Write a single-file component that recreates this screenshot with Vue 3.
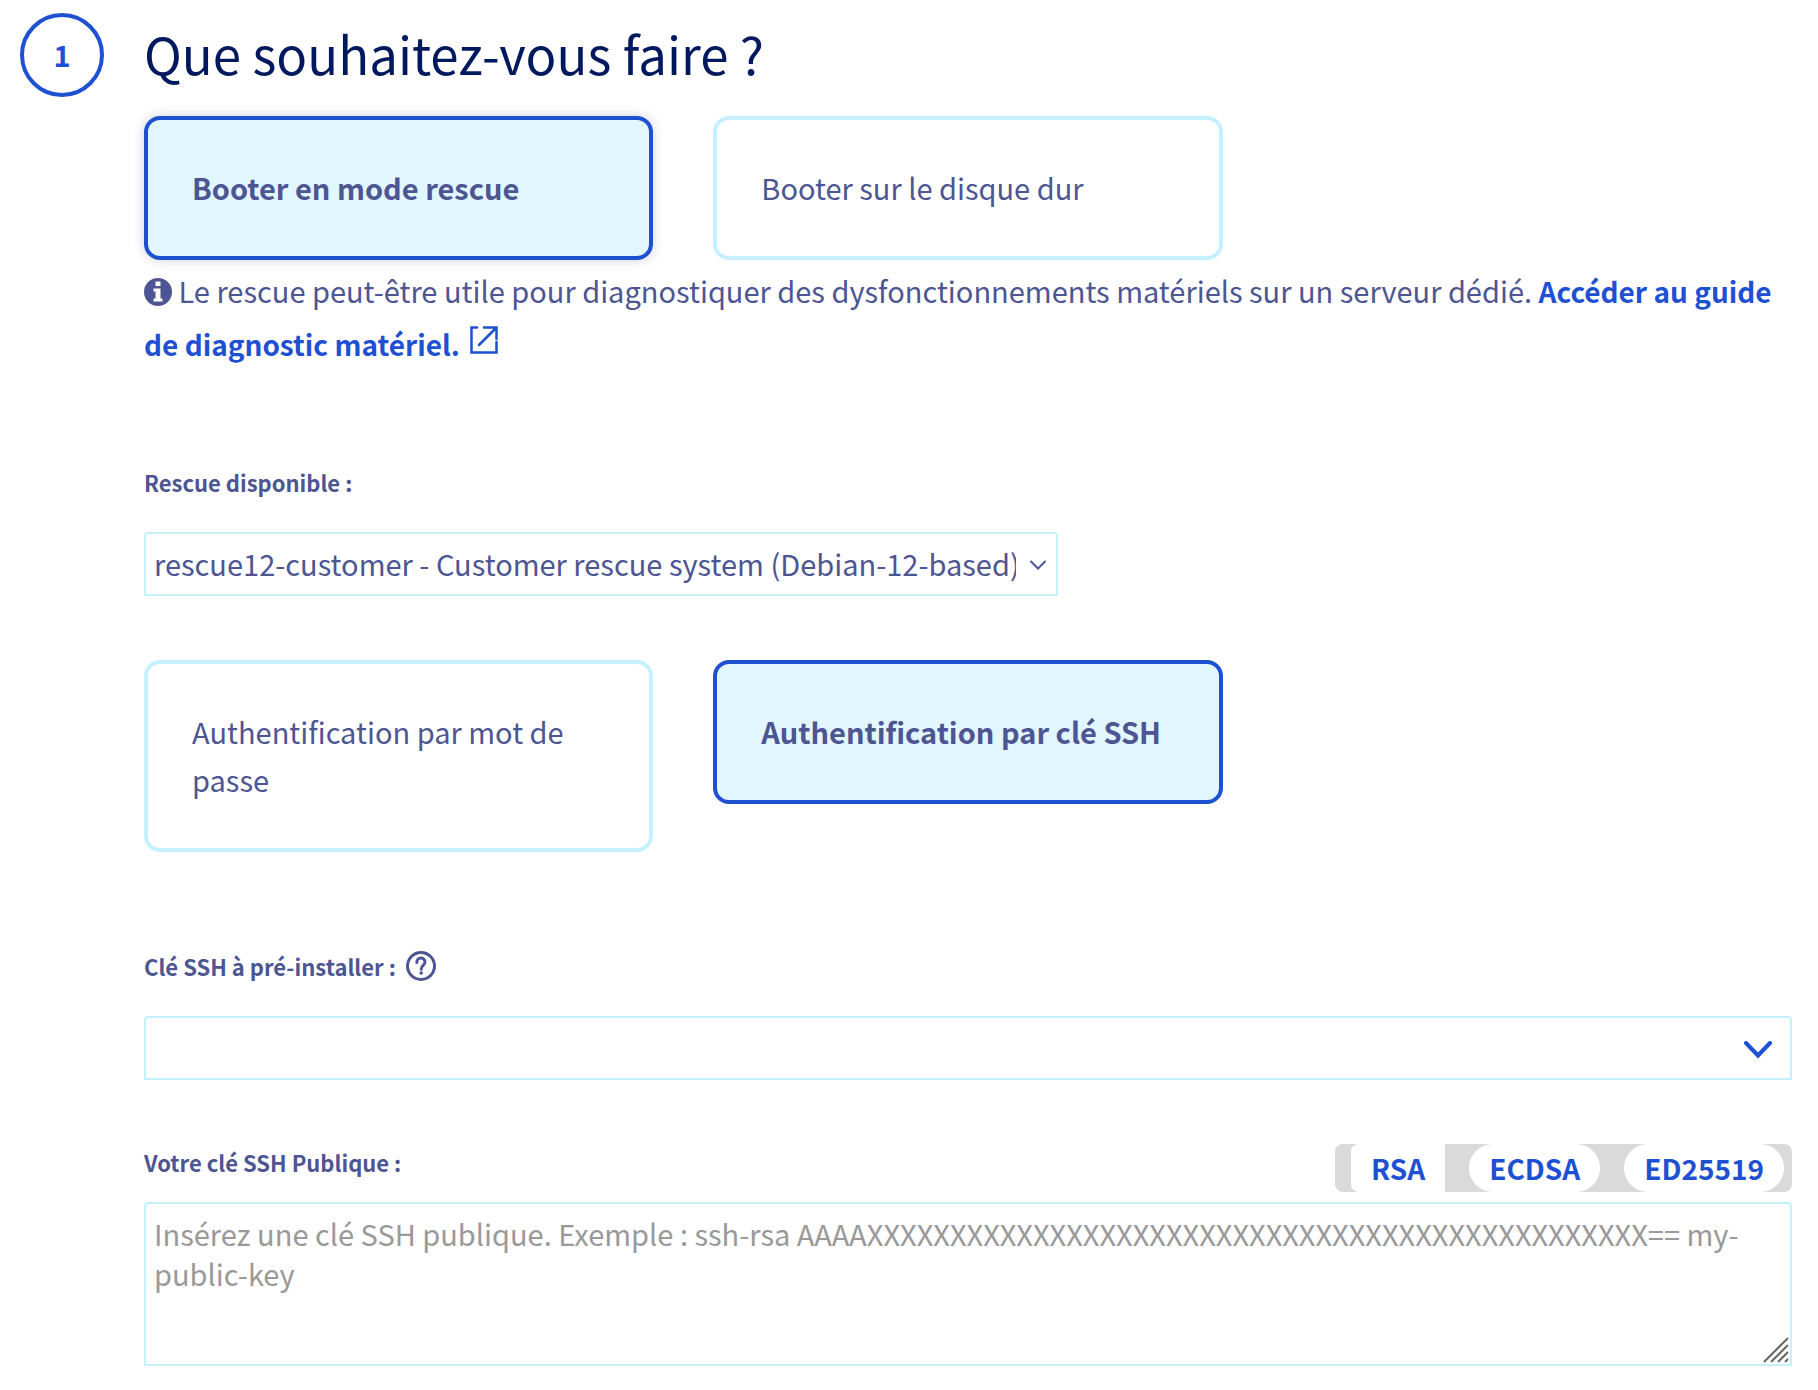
<script setup>
import { ref } from 'vue'

const bootModes = [
  { id: 'rescue', label: 'Booter en mode rescue' },
  { id: 'disk', label: 'Booter sur le disque dur' },
]
const authModes = [
  { id: 'password', label: 'Authentification par mot de passe' },
  { id: 'ssh', label: 'Authentification par clé SSH' },
]
const keyTypes = ['RSA', 'ECDSA', 'ED25519']

const bootMode = ref('rescue')
const authMode = ref('ssh')
const rescueImage = ref('rescue12')
const storedKey = ref('')
const publicKey = ref('')
const placeholder = ref(
  `Insérez une clé SSH publique. Exemple : ssh-rsa AAAA${'X'.repeat(47)}== my-public-key`
)
</script>

<template>
  <main class="step">
    <div class="step-number">1</div>
    <form class="step-body" @submit.prevent>
      <h1>Que souhaitez-vous faire ?</h1>

      <div class="cards" role="radiogroup" aria-label="Mode de démarrage">
        <label
          v-for="mode in bootModes"
          :key="mode.id"
          class="card raised"
          :class="{ selected: bootMode === mode.id }"
        >
          <input v-model="bootMode" type="radio" name="boot" :value="mode.id" />
          <span>{{ mode.label }}</span>
        </label>
      </div>

      <p class="hint">
        <svg class="info-icon" viewBox="0 0 28 28" aria-hidden="true">
          <path
            fill="currentColor"
            fill-rule="evenodd"
            d="M14 0a14 14 0 1 1 0 28a14 14 0 0 1 0-28zM11.500 3.500v4.500h5v-4.500zM9.500 10.500v3h2v7h-2v3h9v-3h-2v-10z"
          />
        </svg>
        Le rescue peut-être utile pour diagnostiquer des dysfonctionnements matériels sur un serveur dédié.
        <a href="#guide">Accéder au guide de diagnostic matériel.
          <svg class="external-icon" viewBox="0 0 28 28" aria-hidden="true">
            <path
              d="M7 1.500H1.500v25h25V16M14 1.500h12.500V13M26 2L9 19"
              fill="none"
              stroke="currentColor"
              stroke-width="2.500"
              stroke-linecap="round"
            />
          </svg>
        </a>
      </p>

      <label class="field-label rescue-label" for="rescue-image">Rescue disponible :</label>
      <div class="select-box narrow">
        <select id="rescue-image" v-model="rescueImage">
          <option value="rescue12">rescue12-customer - Customer rescue system (Debian-12-based)</option>
        </select>
        <svg class="chevron small" viewBox="0 0 16 10" aria-hidden="true">
          <path d="M1 1.500L8 8.500L15 1.500" />
        </svg>
      </div>

      <div class="cards auth" role="radiogroup" aria-label="Authentification">
        <label
          v-for="mode in authModes"
          :key="mode.id"
          class="card"
          :class="{ selected: authMode === mode.id }"
        >
          <input v-model="authMode" type="radio" name="auth" :value="mode.id" />
          <span>{{ mode.label }}</span>
        </label>
      </div>

      <div class="label-line">
        <label class="field-label" for="stored-key">Clé SSH à pré-installer :</label>
        <button class="help" type="button" aria-label="Aide">
          <svg viewBox="0 0 30 30" aria-hidden="true">
            <circle cx="15" cy="15" r="13.500" />
            <path d="M10.800 11.500C10.800 5.500 19 5.800 19 11C19 14.200 15.200 14 15.200 18.200" />
            <circle class="dot" cx="15.200" cy="22" r="1.800" />
          </svg>
        </button>
      </div>
      <div class="select-box">
        <select id="stored-key" v-model="storedKey">
          <option value=""></option>
        </select>
        <svg class="chevron large" viewBox="0 0 28 18" aria-hidden="true">
          <path d="M2 2L14 14.500L26 2" />
        </svg>
      </div>

      <div class="key-header">
        <label class="field-label" for="public-key">Votre clé SSH Publique :</label>
        <div class="key-types">
          <button v-for="type in keyTypes" :key="type" type="button">{{ type }}</button>
        </div>
      </div>
      <div class="textarea-box">
        <textarea id="public-key" v-model="publicKey" :placeholder="placeholder"></textarea>
        <svg class="grip" viewBox="0 0 26 26" aria-hidden="true">
          <path d="M1 25L25 1M8 25L25 8M15 25L25 15M22 25L25 22" />
        </svg>
      </div>
    </form>
  </main>
</template>

<style>
body {
  margin: 0;
  background: #fff;
}
</style>

<style scoped>
* {
  box-sizing: border-box;
}

.step {
  display: grid;
  grid-template-columns: 84px minmax(0, 1fr);
  column-gap: 40px;
  padding: 13px 26px 24px 20px;
  color: #4d5592;
  font-family: "Noto Sans CJK SC", "Noto Sans", sans-serif;
  font-size: 29px;
  line-height: 48px;
}

.step-number {
  display: flex;
  align-items: center;
  justify-content: center;
  width: 84px;
  height: 84px;
  padding-bottom: 2px;
  border: 4px solid #1e50d2;
  border-radius: 50%;
  color: #1e50d2;
  font-weight: 700;
}

h1 {
  margin: 0 0 23px;
  color: #00185e;
  font-size: 51px;
  font-weight: 400;
  line-height: 80px;
}

.cards {
  display: grid;
  grid-template-columns: repeat(3, minmax(0, 1fr));
  align-items: start;
  gap: 60px;
}

.cards.auth {
  margin-top: 64px;
}

.card {
  position: relative;
  padding: 43px 44px 45px;
  border: 4px solid #c5f1ff;
  border-radius: 16px;
  cursor: pointer;
}

.card input {
  position: absolute;
  inset: 0;
  margin: 0;
  opacity: 0;
  cursor: pointer;
}

.card span {
  display: block;
}

.card.selected {
  border-color: #1e50d2;
  background: #e1f6fe;
  font-weight: 700;
}

.card.raised.selected {
  box-shadow: 0 0 12px rgba(0, 0, 120, 0.2);
}

.hint {
  margin: 4px 0 0;
  line-height: 53px;
}

.hint a {
  color: #1e50d2;
  font-size: 28px;
  font-weight: 700;
  line-height: 48px;
  text-decoration: none;
}

.info-icon {
  width: 28px;
  height: 28px;
  vertical-align: -3px;
}

.external-icon {
  width: 28px;
  height: 28px;
  margin-left: 4px;
  vertical-align: 2px;
}

.field-label {
  display: block;
  font-size: 22px;
  font-weight: 700;
  line-height: 32px;
}

.rescue-label {
  margin: 96px 0 34px;
}

.label-line {
  display: flex;
  align-items: center;
  gap: 10px;
  margin: 98px 0 34px;
}

.help {
  width: 30px;
  height: 30px;
  padding: 0;
  border: 0;
  background: none;
  color: inherit;
}

.help svg {
  display: block;
  fill: none;
  stroke: currentColor;
  stroke-width: 3;
  stroke-linecap: round;
}

.help .dot {
  fill: currentColor;
  stroke: none;
}

.select-box {
  position: relative;
}

.select-box.narrow {
  width: 914px;
  max-width: 100%;
}

select,
textarea {
  display: block;
  width: 100%;
  border: 2px solid #c5f1ff;
  border-radius: 4px 4px 0 0;
  background: #fff;
  color: inherit;
  font: inherit;
}

select {
  height: 64px;
  padding: 0 40px 2px 8px;
  appearance: none;
}

.chevron {
  position: absolute;
  fill: none;
  stroke-linecap: round;
  pointer-events: none;
}

.chevron.small {
  top: 28px;
  right: 12px;
  width: 16px;
  height: 10px;
  stroke: #4d5592;
  stroke-width: 2;
}

.chevron.large {
  top: 25px;
  right: 20px;
  width: 28px;
  height: 18px;
  stroke: #1e50d2;
  stroke-width: 4;
}

.key-header {
  display: flex;
  align-items: flex-start;
  justify-content: space-between;
  margin: 64px 0 10px;
}

.key-header .field-label {
  padding-top: 2px;
}

.key-types {
  display: flex;
  gap: 24px;
  padding: 0 8px 0 16px;
  border-radius: 8px;
  background: #dadada;
}

.key-types button {
  height: 48px;
  padding: 0 20px;
  border: 0;
  border-radius: 24px;
  background: #fff;
  color: #1e50d2;
  font: inherit;
  font-size: 28px;
  font-weight: 700;
}

.key-types button:first-child {
  border-radius: 8px 0 0 8px;
}

.textarea-box {
  position: relative;
}

textarea {
  height: 164px;
  padding: 9px 8px;
  line-height: 40px;
  resize: none;
}

textarea::placeholder {
  color: #999;
  opacity: 1;
}

.grip {
  position: absolute;
  right: 3px;
  bottom: 3px;
  width: 26px;
  height: 26px;
  stroke: #666;
  stroke-width: 2;
}
</style>
